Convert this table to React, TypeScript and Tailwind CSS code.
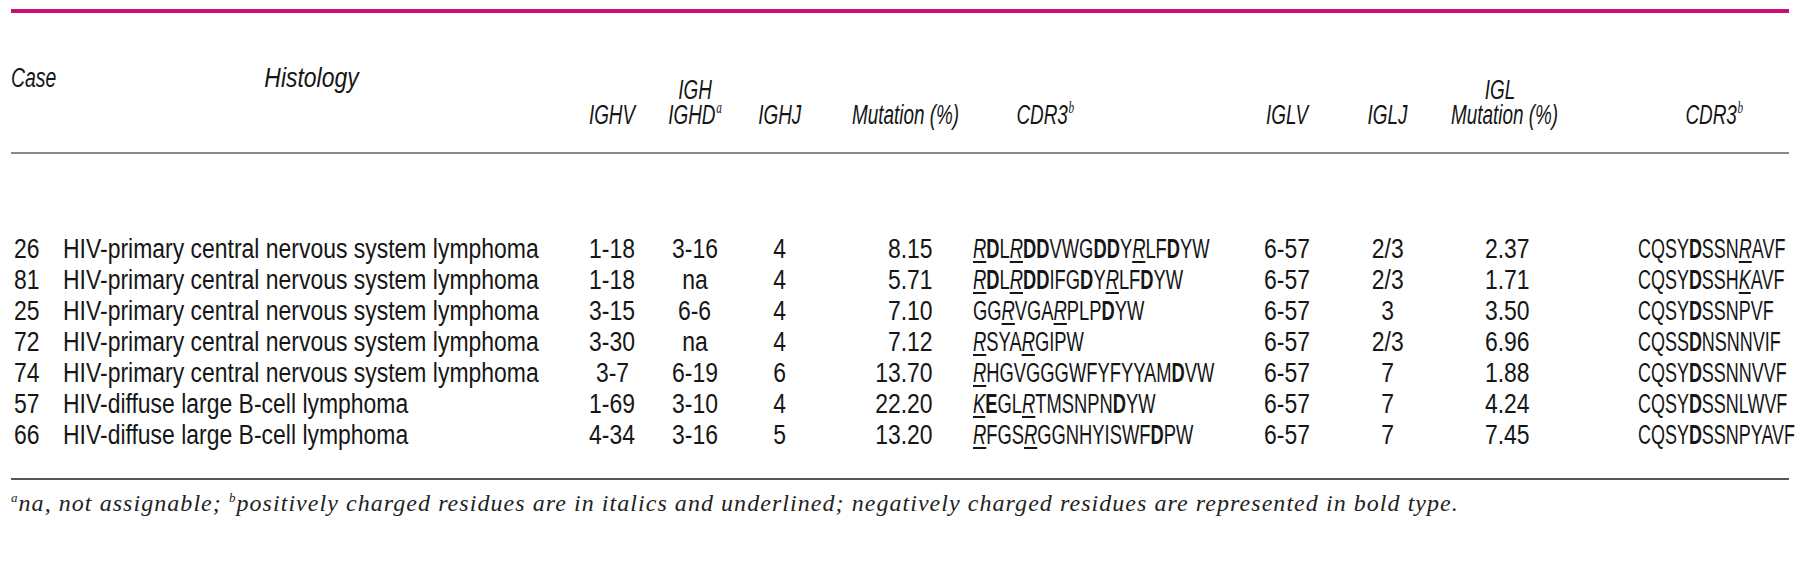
import React from "react";

const sans = "font-['Liberation_Sans',Arial,sans-serif]";

const cols = "grid grid-cols-[52px_507px_85px_80px_90px_135px_270px_115px_85px_140px_219px]";

// the print uses a condensed grotesque; squeeze Liberation Sans to match
const sqL = "inline-block whitespace-nowrap origin-left scale-x-[0.85]";
const sqC = "inline-block whitespace-nowrap scale-x-[0.85]";
const sqR = "inline-block whitespace-nowrap origin-right scale-x-[0.85]";

type Row = {
  id: string;
  histology: string;
  ighv: string;
  ighd: string;
  ighj: string;
  mutH: string;
  cdrH: string;
  iglv: string;
  iglj: string;
  mutL: string;
  cdrL: string;
};

// [X] = positive residue (italic + underlined), {X} = negative residue (bold)
const rows: Row[] = [
  { id: "26", histology: "HIV-primary central nervous system lymphoma", ighv: "1-18", ighd: "3-16", ighj: "4", mutH: "8.15", cdrH: "[R]{D}L[R]{DD}VWG{DD}Y[R]LF{D}YW", iglv: "6-57", iglj: "2/3", mutL: "2.37", cdrL: "CQSY{D}SSN[R]AVF" },
  { id: "81", histology: "HIV-primary central nervous system lymphoma", ighv: "1-18", ighd: "na", ighj: "4", mutH: "5.71", cdrH: "[R]{D}L[R]{DD}IFG{D}Y[R]LF{D}YW", iglv: "6-57", iglj: "2/3", mutL: "1.71", cdrL: "CQSY{D}SSH[K]AVF" },
  { id: "25", histology: "HIV-primary central nervous system lymphoma", ighv: "3-15", ighd: "6-6", ighj: "4", mutH: "7.10", cdrH: "GG[R]VGA[R]PLP{D}YW", iglv: "6-57", iglj: "3", mutL: "3.50", cdrL: "CQSY{D}SSNPVF" },
  { id: "72", histology: "HIV-primary central nervous system lymphoma", ighv: "3-30", ighd: "na", ighj: "4", mutH: "7.12", cdrH: "[R]SYA[R]GIPW", iglv: "6-57", iglj: "2/3", mutL: "6.96", cdrL: "CQSS{D}NSNNVIF" },
  { id: "74", histology: "HIV-primary central nervous system lymphoma", ighv: "3-7", ighd: "6-19", ighj: "6", mutH: "13.70", cdrH: "[R]HGVGGGWFYFYYAM{D}VW", iglv: "6-57", iglj: "7", mutL: "1.88", cdrL: "CQSY{D}SSNNVVF" },
  { id: "57", histology: "HIV-diffuse large B-cell lymphoma", ighv: "1-69", ighd: "3-10", ighj: "4", mutH: "22.20", cdrH: "[K]{E}GL[R]TMSNPN{D}YW", iglv: "6-57", iglj: "7", mutL: "4.24", cdrL: "CQSY{D}SSNLWVF" },
  { id: "66", histology: "HIV-diffuse large B-cell lymphoma", ighv: "4-34", ighd: "3-16", ighj: "5", mutH: "13.20", cdrH: "[R]FGS[R]GGNHYISWF{D}PW", iglv: "6-57", iglj: "7", mutL: "7.45", cdrL: "CQSY{D}SSNPYAVF" },
];

function Sequence({ seq, light }: { seq: string; light?: boolean }) {
  const parts = seq.split(/(\[[A-Z]+\]|\{[A-Z]+\})/).filter(Boolean);
  return (
    <span
      className={
        light
          ? "inline-block whitespace-nowrap origin-left scale-x-[0.665]"
          : "inline-block whitespace-nowrap origin-left scale-x-[0.68]"
      }
    >
      {parts.map((p, i) => {
        if (p.startsWith("[")) {
          return (
            <span key={i} className="italic underline underline-offset-[3px] decoration-[1.5px]">
              {p.slice(1, -1)}
            </span>
          );
        }
        if (p.startsWith("{")) {
          return (
            <span key={i} className="font-bold">
              {p.slice(1, -1)}
            </span>
          );
        }
        return <span key={i}>{p}</span>;
      })}
    </span>
  );
}

// header label
const H = ({ children }: { children: React.ReactNode }) => (
  <span className="inline-block whitespace-nowrap scale-x-[0.7]">{children}</span>
);

const Sup = ({ children }: { children: React.ReactNode }) => (
  <sup className="font-['Liberation_Serif',serif] text-[16px] italic -top-[11px] ml-[1px]">{children}</sup>
);

export default function App() {
  return (
    <div className={`w-[1800px] h-[587px] bg-white text-[#161616] pt-[9px] pl-[11px] ${sans}`}>
      <div className="w-[1778px]">
        {/* top rule */}
        <div className="h-[4px] bg-[#c90f6f]" />

        {/* header */}
        <div className={`${cols} h-[139px] items-end pb-[24px] italic text-[27px] leading-[25px]`}>
          <div className="mb-[37px]">
            <span className="inline-block whitespace-nowrap origin-left scale-x-[0.72]">Case</span>
          </div>
          <div className="text-center mb-[37px] pr-[10px]">
            <span className={sqC}>Histology</span>
          </div>
          <div className="text-center">
            <H>IGHV</H>
          </div>
          <div className="text-center flex flex-col">
            <H>IGH</H>
            <H>
              IGHD<Sup>a</Sup>
            </H>
          </div>
          <div className="text-center">
            <H>IGHJ</H>
          </div>
          <div className="text-center pl-[4px]">
            <H>Mutation (%)</H>
          </div>
          <div className="text-center pr-[100px]">
            <H>
              CDR3<Sup>b</Sup>
            </H>
          </div>
          <div className="text-center">
            <H>IGLV</H>
          </div>
          <div className="text-center">
            <H>IGLJ</H>
          </div>
          <div className="text-center flex flex-col">
            <H>IGL</H>
            <H>Mutation (%)</H>
          </div>
          <div className="text-center pl-[70px]">
            <H>
              CDR3<Sup>b</Sup>
            </H>
          </div>
        </div>

        <div className="h-[2px] bg-[#8a8a8a]" />

        {/* body */}
        <div className="pt-[80px] text-[27px] leading-[31px]">
          {rows.map((r) => (
            <div key={r.id} className={`${cols} h-[31px] whitespace-nowrap`}>
              <div className="pl-[3px]">
                <span className={sqL}>{r.id}</span>
              </div>
              <div>
                <span className={sqL}>{r.histology}</span>
              </div>
              <div className="text-center">
                <span className={sqC}>{r.ighv}</span>
              </div>
              <div className="text-center">
                <span className={sqC}>{r.ighd}</span>
              </div>
              <div className="text-center">
                <span className={sqC}>{r.ighj}</span>
              </div>
              <div className="text-right pr-[27px]">
                <span className={sqR}>{r.mutH}</span>
              </div>
              <div className="pl-[13px]">
                <Sequence seq={r.cdrH} />
              </div>
              <div className="text-center">
                <span className={sqC}>{r.iglv}</span>
              </div>
              <div className="text-center">
                <span className={sqC}>{r.iglj}</span>
              </div>
              <div className="text-right pr-[40px]">
                <span className={sqR}>{r.mutL}</span>
              </div>
              <div className="pl-[68px]">
                <Sequence seq={r.cdrL} light />
              </div>
            </div>
          ))}
        </div>

        <div className="mt-[27px] h-[2px] bg-[#555555]" />

        {/* footnote */}
        <p className="mt-[9px] font-['Liberation_Serif',serif] italic text-[24px] leading-[28px] tracking-[1.05px] whitespace-nowrap text-[#222]">
          <sup className="text-[13px] -top-[9px]">a</sup>na, not assignable; <sup className="text-[13px] -top-[9px]">b</sup>
          positively charged residues are in italics and underlined; negatively charged residues are represented in bold
          type.
        </p>
      </div>
    </div>
  );
}
